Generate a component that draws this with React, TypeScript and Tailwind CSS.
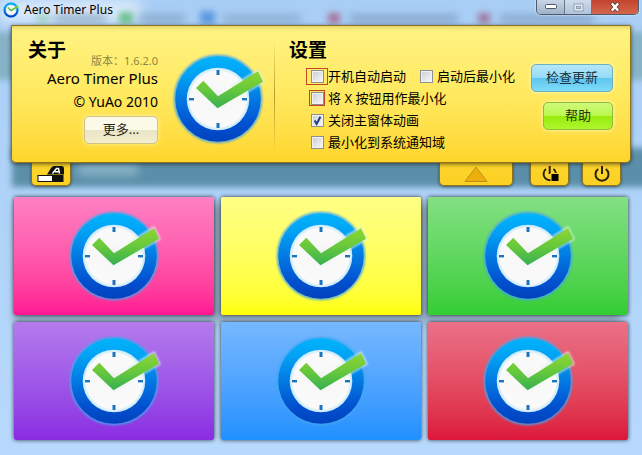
import React, { useId, useState } from 'react';

function ClockLogo({ className }: { className: string }) {
  const id = useId();
  const ring = `${id}-ring`;
  const tick = `${id}-tick`;
  const face = `${id}-face`;
  const glow = `${id}-glow`;
  return (
    <svg viewBox="-46 -46 92 92" className={`overflow-visible ${className}`} aria-hidden="true">
      <defs>
        <linearGradient id={ring} x1="0" y1="0" x2="0" y2="1">
          <stop offset="0" stopColor="#00b4fb" />
          <stop offset="0.2" stopColor="#02a3f5" />
          <stop offset="0.8" stopColor="#0250cf" />
          <stop offset="1" stopColor="#0142bd" />
        </linearGradient>
        <linearGradient id={tick} x1="0" y1="0" x2="0" y2="1">
          <stop offset="0" stopColor="#8fd630" />
          <stop offset="0.5" stopColor="#66c83c" />
          <stop offset="1" stopColor="#35b052" />
        </linearGradient>
        <radialGradient id={face}>
          <stop offset="0" stopColor="#e9ebea" />
          <stop offset="0.35" stopColor="#f8f8f8" />
          <stop offset="0.88" stopColor="#fafafa" />
          <stop offset="1" stopColor="#bfe6fb" />
        </radialGradient>
        <filter id={glow} x="-20%" y="-20%" width="140%" height="140%">
          <feGaussianBlur stdDeviation="1.3" />
        </filter>
      </defs>
      <circle r="43" fill="none" stroke="#3fa6ee" strokeWidth="2.5" filter={`url(#${glow})`} />
      <circle r="42.8" fill={`url(#${ring})`} />
      <circle r="31.3" fill={`url(#${face})`} />
      <g fill="#1c74bd">
        <rect x="-1.5" y="-29" width="3" height="5" />
        <rect x="-1.5" y="24" width="3" height="5" />
        <rect x="-29" y="-1" width="5" height="2.4" />
        <rect x="24" y="-1" width="5" height="2.4" />
      </g>
      <path
        d="M14 -12.5L40 -28.5L45.6 -17L22 -3.5"
        fill="none"
        stroke="#d4f4e0"
        strokeWidth="1.6"
        filter={`url(#${glow})`}
      />
      <path
        d="M-22 -11L-14.7 -18.3L0 -2.7L40 -27.7L45 -17.3L-.5 9.3Z"
        fill={`url(#${tick})`}
      />
    </svg>
  );
}

function Option({
  label,
  initial = false,
  mark = '',
}: {
  label: string;
  initial?: boolean;
  mark?: string;
}) {
  const [on, setOn] = useState(initial);
  return (
    <label className="flex h-[22px] items-center text-[13px] leading-4 whitespace-nowrap">
      <span className="flex w-[22px] shrink-0 justify-center">
        <span className={`flex items-center justify-center ${mark}`}>
          <span className="grid">
            <input
              type="checkbox"
              checked={on}
              onChange={(e) => setOn(e.target.checked)}
              className="peer size-[13px] appearance-none border border-[#8e8f8f] bg-linear-to-br from-[#c9ced6] to-[#f8f9fa] shadow-[inset_0_0_0_1px_#f2f2f2] [grid-area:1/1]"
            />
            <svg
              viewBox="0 0 13 13"
              className="pointer-events-none invisible size-[13px] peer-checked:visible [grid-area:1/1]"
              aria-hidden="true"
            >
              <path d="M3.6 6.6L5.6 10L9.4 2.8" fill="none" stroke="#263c8c" strokeWidth="2" />
            </svg>
          </span>
        </span>
      </span>
      {label}
    </label>
  );
}

const tab =
  'flex h-[23px] items-center justify-center rounded-b-[5px] border border-t-0 border-[#8f7420] bg-linear-to-b from-[#fdd52c] to-[#fcd023] shadow-[0_1px_3px_rgba(0,0,0,0.5)]';

const tiles = [
  { name: 'Pink', fill: 'from-[#ff80c4] to-[#ff1493]' },
  { name: 'Yellow', fill: 'from-[#ffff84] to-[#ffff00]' },
  { name: 'Green', fill: 'from-[#82e082] to-[#32cd32]' },
  { name: 'Purple', fill: 'from-[#b57aec] to-[#8a2be2]' },
  { name: 'Blue', fill: 'from-[#76b8ff] to-[#1e90ff]' },
  { name: 'Red', fill: 'from-[#ea7088] to-[#dc143c]' },
];

function Backdrop() {
  return (
    <div className="absolute inset-0 -z-10 overflow-hidden bg-linear-to-b from-[#a9cef5] to-[#b7d9fd]" aria-hidden="true">
      <div className="absolute top-[32px] -left-2 h-[48px] w-[30px] bg-[#86b3c7] blur-[3px]" />
      <div className="absolute top-[32px] -right-2 h-[48px] w-[30px] bg-[#86b3c7] blur-[3px]" />
      <div className="absolute top-[148px] -right-4 left-[12px] h-[39px] bg-[#5b8fa9] blur-[3px]" />
      <div className="absolute top-[162px] left-[78px] h-[14px] w-[60px] bg-[#84afc4] blur-[4px]" />
      <div className="absolute top-[204px] right-[22px] left-[14px] h-[118px] bg-[#8ba4ba] blur-[4px]" />
      <div className="absolute top-0 left-0 h-[22px] w-[140px] bg-white/60 blur-[7px]" />
      <div className="absolute top-[14px] left-[38px] h-[9px] w-[10px] bg-[#8fc9b0] blur-[4px]" />
      <div className="absolute top-[15px] left-[54px] h-[7px] w-[52px] bg-[#8ba9c4] blur-[4px]" />
      <div className="absolute top-[12px] left-[119px] h-[12px] w-[14px] bg-[#6fc091] blur-[3px]" />
      <div className="absolute top-[15px] left-[139px] h-[7px] w-[46px] bg-[#81a4c4] blur-[4px]" />
      <div className="absolute top-[11px] left-[200px] h-[13px] w-[15px] bg-[#5a98e0] blur-[3px]" />
      <div className="absolute top-[15px] left-[223px] h-[7px] w-[78px] bg-[#86a8cd] blur-[4px]" />
      <div className="absolute top-[13px] left-[328px] h-[10px] w-[12px] bg-[#a97099] blur-[3px]" />
      <div className="absolute top-[15px] left-[350px] h-[7px] w-[108px] bg-[#7f9fc5] blur-[4px]" />
      <div className="absolute top-[13px] left-[478px] h-[10px] w-[12px] bg-[#a0769f] blur-[3px]" />
      <div className="absolute top-[15px] left-[500px] h-[7px] w-[94px] bg-[#84a2c4] blur-[4px]" />
    </div>
  );
}

export default function App() {
  return (
    <main className="relative isolate min-h-screen font-['Noto_Sans','Noto_Sans_CJK_SC',sans-serif] text-black">
      <Backdrop />
      <header className="flex h-[25px] items-start px-[3px]">
        <div className="flex h-5 items-center gap-[5px]">
          <ClockLogo className="size-4" />
          <h1 className="text-xs">Aero Timer Plus</h1>
        </div>
        <div className="ml-auto flex h-[15px] overflow-hidden rounded-b-[5px] border border-t-0 border-[#4d5a6c] shadow-[0_0_2px_#fff]">
          <button aria-label="Minimize" className="flex w-7 items-center justify-center border-r border-[#6a788a] bg-linear-to-b from-[#c9d6e6] to-[#9fb2c9]">
            <svg viewBox="0 0 12 6" className="h-[6px] w-3">
              <rect x=".5" y=".5" width="11" height="4" rx="1" fill="#fff" stroke="#4e5766" />
            </svg>
          </button>
          <button aria-label="Maximize" className="flex w-[27px] items-center justify-center border-r border-[#6a788a] bg-linear-to-b from-[#cfdceb] to-[#afc3da]">
            <svg viewBox="0 0 11 9" className="h-[9px] w-[11px]">
              <rect x="1" y="1" width="9" height="7" fill="#e3eaf2" stroke="#94a1b2" />
              <rect x="3.5" y="3.5" width="4" height="2" fill="#b9c9da" stroke="#94a1b2" />
            </svg>
          </button>
          <button aria-label="Close" className="flex w-[46px] items-center justify-center bg-linear-to-b from-[#c2432e] to-[#d4674d]">
            <svg viewBox="0 0 12 10" className="h-[10px] w-3">
              <path d="M2.5 1L9.5 9M9.5 1L2.5 9" stroke="#5d302e" strokeWidth="4" />
              <path d="M2.8 1.4L9.2 8.6M9.2 1.4L2.8 8.6" stroke="#fff" strokeWidth="2.4" />
            </svg>
          </button>
        </div>
      </header>

      <div className="relative mx-[11px] flex rounded-b-[5px] border border-[#8f7420] bg-linear-to-b from-[#fff382] via-[#ffe95f] to-[#fed62b] pt-3 pr-[17px] pb-[9px] pl-4 shadow-[0_1px_4px_rgba(0,0,0,0.6),inset_0_5px_5px_-4px_#d8c55e]">
        <section className="w-[130px] shrink-0">
          <h2 className="text-[19px] leading-6 font-bold">关于</h2>
          <div className="-mt-2 flex flex-col items-end">
            <p className="text-[11px] leading-[14px] text-[#8d8745]">版本：1.6.2.0</p>
            <p className="text-[15px] leading-5">Aero Timer Plus</p>
            <p className="mt-1 text-sm leading-5">© YuAo 2010</p>
            <button className="mt-1 h-7 w-[74px] rounded-[5px] border border-[#cfc38a] bg-[linear-gradient(#fbf9e8_50%,#ebe5c8_50%,#f3edcc)] text-[13px] text-[#2b2814] shadow-[0_0_4px_#fff4a8]">
              更多...
            </button>
          </div>
        </section>
        <ClockLogo className="mt-[15px] ml-[14px] size-[92px] shrink-0" />
        <div className="mt-[2px] ml-[10px] w-px shrink-0 bg-linear-to-b from-transparent via-[#b99a2c] to-transparent" />
        <section className="ml-[14px]">
          <h2 className="text-[19px] leading-6 font-bold">设置</h2>
          <div className="mt-[3px] ml-[17px]">
            <div className="flex gap-[9px]">
              <Option label="开机自动启动" mark="h-[17px] w-[22px] border border-[#c6451f]" />
              <Option label="启动后最小化" />
            </div>
            <Option label="将 X 按钮用作最小化" mark="size-4 border border-[#c6451f]" />
            <Option label="关闭主窗体动画" initial />
            <Option label="最小化到系统通知域" />
          </div>
        </section>
        <div className="mt-[26px] ml-auto flex shrink-0 flex-col items-end gap-[10px]">
          <button className="h-7 w-[82px] rounded-[5px] border border-[#6db1bd] bg-[linear-gradient(#b5e6f8,#94dbf8_50%,#5cc5f0_50%,#80dcf8)] text-[13px] text-[#16333d] shadow-[0_0_4px_#fffbc0]">
            检查更新
          </button>
          <button className="h-7 w-[70px] rounded-[5px] border border-[#8dbd3c] bg-[linear-gradient(#d0f87c,#b8f84c_50%,#98ec0c_50%,#aef52c)] text-[13px] text-[#22330c] shadow-[0_0_4px_#fffbc0]">
            帮助
          </button>
        </div>
      </div>

      <nav className="flex pr-[21px] pl-[31px]">
        <button aria-label="Opacity" className={`${tab} w-10`}>
          <svg viewBox="0 0 28 18" className="h-[18px] w-7">
            <path d="M10 9.5L14 3Q15.2 1 17.5 1H24.5Q27 1 27 3.5V9.5Z" fill="#111" />
            <path d="M15.5 8.5L19.5 3.5H21.5L22.5 8.5M18 6.7H22" fill="none" stroke="#fff" strokeWidth="1.5" />
            <rect x="1" y="10.5" width="25" height="6" fill="#fff" stroke="#111" />
            <rect x="15" y="11" width="11" height="5" fill="#111" />
          </svg>
        </button>
        <button aria-label="Collapse" className={`${tab} ml-auto w-[74px]`}>
          <svg viewBox="0 0 24 17" className="h-[17px] w-6">
            <path d="M12 1L23 15.5H1Z" fill="#eeaf0c" stroke="#bf9021" strokeLinejoin="round" />
          </svg>
        </button>
        <button aria-label="Stop timers" className={`${tab} ml-[17px] w-[39px]`}>
          <svg viewBox="0 0 18 18" className="size-[18px]">
            <path d="M5 4A6.2 6.2 0 1 0 12.5 4M8.7 1V9" fill="none" stroke="#2a220b" strokeWidth="2" />
            <rect x="10" y="8.5" width="8" height="8" fill="#000" stroke="#fcd227" />
          </svg>
        </button>
        <button aria-label="Power" className={`${tab} ml-[13px] w-[39px]`}>
          <svg viewBox="0 0 18 18" className="size-[18px]">
            <path d="M5.2 4A6.5 6.5 0 1 0 12.8 4M9 1V9" fill="none" stroke="#2a220b" strokeWidth="2" />
          </svg>
        </button>
      </nav>

      <div className="mt-[11px] grid grid-cols-3 gap-[7px] px-[14px]">
        {tiles.map((t) => (
          <button
            key={t.name}
            aria-label={`${t.name} timer`}
            className={`flex items-center justify-center rounded-[2px] bg-linear-to-b py-[13px] shadow-[0_0_4px_rgba(0,0,0,0.75)] ${t.fill}`}
          >
            <ClockLogo className="size-[92px]" />
          </button>
        ))}
      </div>
    </main>
  );
}
